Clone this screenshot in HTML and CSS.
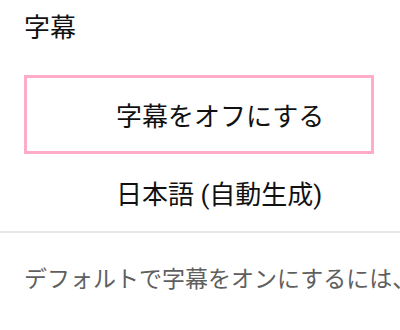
FILE: index.html
```html
<!DOCTYPE html>
<html lang="ja">
<head>
  <meta charset="UTF-8">
  <meta name="viewport" content="width=device-width, initial-scale=1.0">
  <title>字幕</title>
  <link rel="stylesheet" href="styles.css">
</head>
<body>
  <div class="panel">
    <h2 class="title">字幕</h2>
    <ul class="options">
      <li class="option selected">字幕をオフにする</li>
      <li class="option">日本語 (自動生成)</li>
    </ul>
    <p class="hint">デフォルトで字幕をオンにするには、</p>
  </div>
</body>
</html>
```

FILE: styles.css
```css
body {
  margin: 0;
  background-color: #fff;
  font-family: "Noto Sans CJK JP", "Noto Sans", sans-serif;
  color: #111;
}
.panel {
  width: 400px;
  height: 330px;
  overflow: hidden;
}
.title {
  margin: 0;
  padding: 8px 24px 0;
  font-size: 26px;
  font-weight: normal;
  line-height: 36px;
}
.options {
  margin: 31px 0 0;
  padding: 0 26px 0 24px;
  list-style: none;
  border-bottom: 2px solid #e6e6e6;
}
.option {
  box-sizing: border-box;
  display: flex;
  align-items: center;
  height: 79px;
  padding-left: 89px;
  border: 3px solid transparent;
  font-family: Roboto, "Noto Sans CJK JP", sans-serif;
  font-size: 26px;
  white-space: nowrap;
}
.option:last-child {
  height: 77px;
}
.option.selected {
  border-color: #ffabc9;
}
.hint {
  margin: 0;
  padding: 28px 0 0 24px;
  font-size: 23px;
  line-height: 32px;
  color: #5f5f5f;
  white-space: nowrap;
  overflow: hidden;
}
```
